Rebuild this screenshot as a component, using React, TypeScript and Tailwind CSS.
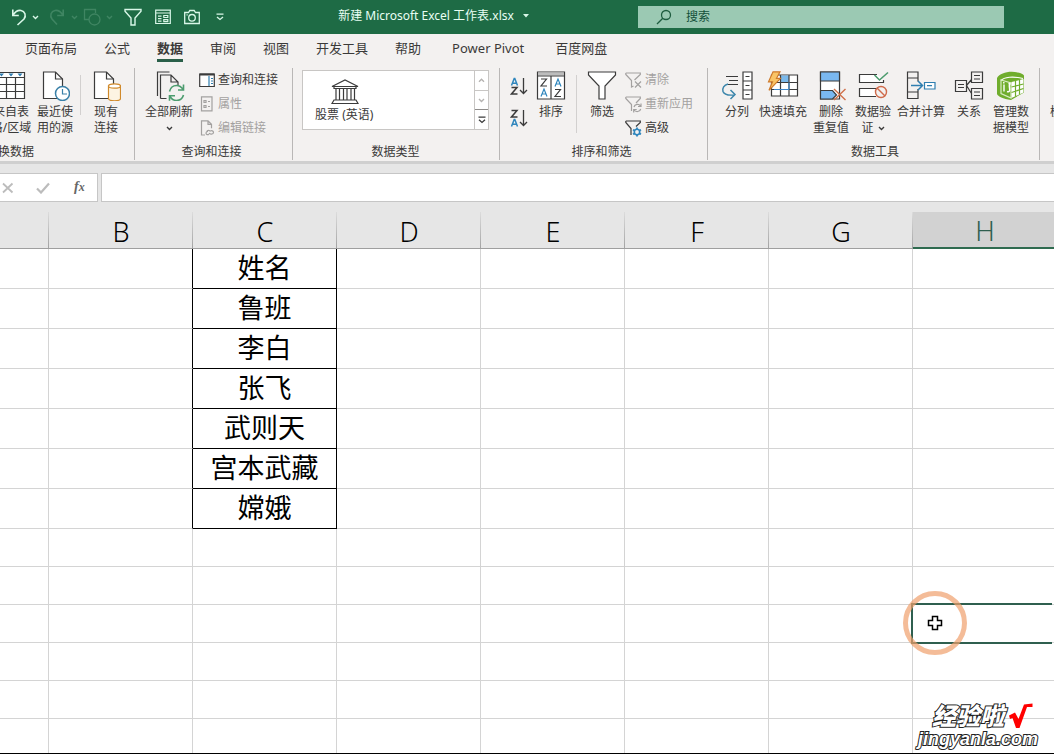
import React from 'react';

type IconProps = { children: React.ReactNode; w?: number; h?: number };

function Icon({ children, w = 30, h = 30 }: IconProps) {
  return (
    <svg width={w} height={h} viewBox={`0 0 ${w} ${h}`} fill="none" stroke="#3b3b3b" strokeWidth="1.2" className="shrink-0" aria-hidden="true">
      {children}
    </svg>
  );
}

function Chevron({ color = '#3b3b3b' }: { color?: string }) {
  return (
    <svg width="7" height="5" viewBox="0 0 7 5" fill="none" stroke={color} strokeWidth="1.4" className="inline-block shrink-0" aria-hidden="true">
      <path d="M1 1l2.5 2.5L6 1" />
    </svg>
  );
}

/* ---------- large ribbon icons ---------- */

const tableIcon = (
  <Icon>
    <path d="M1.500 1.500h27v26h-27zM10.500 6v21M19.500 6v21M1.500 6.500h27M1.500 13.500h27M1.500 20.500h27" fill="#fff" />
    <path d="M3 2.500h5l-2.500 3zM12.500 2.500h5l-2.500 3zM21.500 2.500h5l-2.500 3z" fill="#2b7bb0" stroke="none" />
  </Icon>
);

const recentIcon = (
  <Icon>
    <path d="M3.500 1h12l7 7v19.500h-19z" fill="#fff" />
    <path d="M15.500 1v7h7" />
    <circle cx="22.500" cy="22.500" r="7" fill="#fff" stroke="#3a80a8" strokeWidth="1.500" />
    <path d="M22.500 18v5h4.500" stroke="#3a80a8" />
  </Icon>
);

const existingIcon = (
  <Icon>
    <path d="M3.500 1h12l7 7v19.500h-19z" fill="#fff" />
    <path d="M15.500 1v7h7" />
    <path d="M17.500 15v12.500c0 1.300 2.700 2.300 6 2.300s6-1 6-2.300v-12.500z" fill="#fdf4e3" stroke="#d08a2c" />
    <ellipse cx="23.500" cy="15" rx="6" ry="2.200" fill="#fff" stroke="#d08a2c" />
  </Icon>
);

const refreshIcon = (
  <Icon w={32}>
    <path d="M4.500 25v-24h12" />
    <path d="M7.500 27.500v-23.500h10.500l7 7v3M18 4v7h7M7.500 27.500h6" />
    <path d="M16.500 20.500c1-4 4-6 7-6 3 0 5 1.500 6.500 4M30.500 13.500v5.500h-5.500M30.500 24c-1 3.500-4 5.500-7 5.500-3 0-5-1.500-6.500-4M16.500 29.800v-5h5.500" stroke="#4c9c6e" strokeWidth="1.600" />
  </Icon>
);

const sortIcon = (
  <Icon>
    <path d="M1.500 1h27v27h-27z" fill="#fff" />
    <path d="M2 1.500h26v3h-26z" fill="#bdbdbd" stroke="none" />
    <path d="M1.500 5h27M15 5v23" />
    <path d="M5 8h5.500l-5.500 7h6M19 18.500h5.500l-5.500 7h6" />
    <path d="M5 25.500l3-7.500 3 7.500M6 23h4M19 15.500l3-7.500 3 7.500M20 13h4" stroke="#2f86bd" />
  </Icon>
);

const filterIcon = (
  <Icon>
    <path d="M1.500 1h27v3l-10.500 11v13h-6v-13l-10.500-11z" fill="#fff" />
  </Icon>
);

const splitIcon = (
  <Icon w={32}>
    <path d="M5 5.500h12M8 9.500h9M6 13.500h11" />
    <path d="M22 1h9v27h-9zM22 10h9M22 19h9M24.500 5.500h4M24.500 14.500h4M24.500 23.500h4" fill="#fff" />
    <path d="M7 13c-4 1-6 4-5 7.500 1 3 5 4 11 3.500M9.500 19l4.500 4.500-4.500 4.500" stroke="#3c86ab" strokeWidth="1.500" />
  </Icon>
);

const flashIcon = (
  <Icon w={32}>
    <path d="M4.500 4h26v21h-26z" fill="#fff" />
    <path d="M14 4.500h8v7h-8z" fill="#7ab8ea" stroke="none" />
    <path d="M13.500 4v21M22 4v21M4.500 11.500h26M4.500 18.500h26" />
    <path d="M7 18.500h15M22 11.500v7" stroke="#3c86c9" />
    <path d="M6 .8h7l-3.500 6.500h4l-11.500 12 3.500-8.500h-4z" fill="#f9c466" stroke="#cf7a2b" strokeWidth="1.200" />
  </Icon>
);

const duplicateIcon = (
  <Icon>
    <path d="M4.500 1h19v27h-19z" fill="#fff" />
    <path d="M4.500 1h19v9h-19zM4.500 19.500h12l4 4.500-4 4h-12z" fill="#7ab8f0" />
    <path d="M18 18l11.500 11M29.500 18l-11.500 11" stroke="#d0704a" strokeWidth="1.400" />
  </Icon>
);

const validateIcon = (
  <Icon w={32}>
    <path d="M20 3.500H2.500v8h24V9" fill="#fff" />
    <path d="M19 25.500H2.500v-8H19" fill="#fff" />
    <path d="M17.500 4l5 5L31 1.500" stroke="#4c9c6e" strokeWidth="1.600" />
    <circle cx="24" cy="21" r="5.500" stroke="#cf6a4a" strokeWidth="1.400" />
    <path d="M20 17l8 8" stroke="#cf6a4a" strokeWidth="1.400" />
  </Icon>
);

const consolidateIcon = (
  <Icon>
    <path d="M1.500 1h10.500v6h-10.500zM1.500 21h10.500v6.500h-10.500zM1.500 7v14M12 10.500v-3M12 21v-3" />
    <path d="M5 14.500h11M12 10l4.500 4.500-4.500 4.500" stroke="#2f7fb0" strokeWidth="1.500" />
    <path d="M18.500 11.500h10.500v6.500h-10.500zM21 14.700h5" fill="#fff" stroke="#2f7fb0" />
  </Icon>
);

const relationIcon = (
  <Icon>
    <path d="M1.500 9.500h11v11h-11zM4 13.500h6M4 16.500h6M17.500 1h11v10.500h-11zM20 4.500h6M20 8h6M17.500 17.500h11v10.500h-11zM20 21h6M20 24.500h6M12.500 14.500l5-6M12.500 14.500l5 8" />
  </Icon>
);

const modelIcon = (
  <Icon>
    <path d="M1 7c3-5 12-7.500 21-5.500 3 .6 5 1.500 6 3v17l-13 7.500c-8-1-13-3.500-14-6z" fill="#70ad2d" stroke="none" />
    <path d="M5 9.500c3-3.500 12-4.500 22-2" stroke="#fff" strokeWidth="1.200" />
    <path d="M5 9v13.500l10 4.500v-15z" stroke="#d9edc2" />
    <path d="M15.500 11l12-3v13.500l-12 5.500z" fill="#fff" stroke="none" />
    <path d="M19.500 10v15.500M23.500 9v14.500M15.500 16l12-3M15.500 21.500l12-4" stroke="#70ad2d" />
    <path d="M8 13.500v7M7.800 11v1.500M11 20.500c2.500 1 3-1 2.500-3.500s-.5-4 1-4.500M12.500 13l2-.8" stroke="#fff" strokeWidth="1.400" />
  </Icon>
);

const whatIfIcon = (
  <Icon>
    <path d="M8.500 1.500h20v27h-20zM8.500 10h20M17 1.500v27" fill="#fff" />
  </Icon>
);

/* ---------- small ribbon icons ---------- */

const queryIcon = (
  <Icon w={16} h={16}>
    <path d="M.7 2h14.600v12.500H.7z" fill="#fff" />
    <path d="M.7 2.500h14.600" strokeWidth="2" />
    <path d="M10 4v10" stroke="#2f7fb0" />
    <path d="M12 6.500h2M12 9h2M12 11.500h2" stroke="#2f7fb0" />
  </Icon>
);

const propsIcon = (
  <Icon w={16} h={16}>
    <path d="M2.500.8h10.500v14h-10.500zM5 4.500h2v2h-2zM5 9.500h2v2h-2zM9 5.500h2M9 10.500h2" stroke="#a3a1a0" />
  </Icon>
);

const editLinkIcon = (
  <Icon w={16} h={16}>
    <path d="M6 15h-3.500V.8h6.500l3.500 3.500v4M9 .8v3.500h3.500" stroke="#a3a1a0" />
    <path d="M8 11.500c0-1.500 3-1.500 3.500 0M10 13c.5 1.500 4.500 1.500 4.500-.5s-2-2-3-1.500M10 14.500c-2 .5-3 0-3-1.500s1-1.500 2-1.500" stroke="#a3a1a0" />
  </Icon>
);

const clearIcon = (
  <Icon w={17} h={17}>
    <path d="M.8 1h14.500v1.500l-5.800 5.500M.8 1v1.500l5.700 6v6.500l2-1" stroke="#a3a1a0" />
    <path d="M10 9.500l6 6M16 9.500l-6 6" stroke="#a3a1a0" />
  </Icon>
);

const reapplyIcon = (
  <Icon w={17} h={17}>
    <path d="M.8 1h14.500v1.500l-4.300 4.500M.8 1v1.500l5.700 6v6.500" stroke="#a3a1a0" />
    <path d="M9 11c.7-3 5-3.500 6.500-.8M16 7.500v3h-3M15.700 13c-.7 3-5 3.300-6.500 1M8.700 16.500v-3h3" stroke="#a3a1a0" />
  </Icon>
);

const advancedIcon = (
  <Icon w={17} h={17}>
    <path d="M.8 1h14.500v1.500l-4.300 4M.8 1v1.500l5.200 6v6.500" />
    <circle cx="12" cy="12" r="2.700" stroke="#2f86bd" strokeWidth="1.600" />
    <path d="M12 7.500v2M12 14.500v2M8 9.700l1.800 1M14.200 13.300l1.800 1M8 14.300l1.800-1M14.200 10.700l1.800-1" stroke="#2f86bd" strokeWidth="1.800" />
  </Icon>
);

function SortArrow({ desc = false }: { desc?: boolean }) {
  const a = desc ? 10.5 : 1.5;
  const z = desc ? 1.5 : 10.5;
  return (
    <button type="button" aria-label={desc ? '降序' : '升序'} className="h-5">
      <Icon w={18} h={20}>
        <path d={`M1.500 ${a + 7}l2.700-7h.6l2.700 7M2.500 ${a + 4.700}h4`} stroke="#2f86bd" strokeWidth="1.500" />
        <path d={`M1.500 ${z}h5.500l-5.500 6.500h6`} strokeWidth="1.500" />
        <path d="M13.500 1v15.500M10 13l3.500 3.500L17 13" strokeWidth="1.300" />
      </Icon>
    </button>
  );
}

/* ---------- ribbon building blocks ---------- */

type BigProps = { icon: React.ReactNode; lines: string[]; width: string; arrow?: boolean };

function BigButton({ icon, lines, width, arrow }: BigProps) {
  return (
    <button type="button" className={`flex shrink-0 flex-col items-center pt-[3px] whitespace-nowrap ${width}`}>
      {icon}
      <span className="mt-[3px] block">{lines[0]}</span>
      {(lines[1] || arrow) && (
        <span className="flex h-4 items-center gap-1">
          {lines[1]}
          {arrow && <Chevron />}
        </span>
      )}
    </button>
  );
}

function SmallButton({ icon, label, disabled }: { icon: React.ReactNode; label: string; disabled?: boolean }) {
  return (
    <button type="button" disabled={disabled} className="flex h-6 items-center gap-[3px] whitespace-nowrap disabled:text-[#a3a1a0]">
      {icon}
      {label}
    </button>
  );
}

function Group({ title, className = '', children }: { title: string; className?: string; children: React.ReactNode }) {
  return (
    <section className={`flex shrink-0 flex-col border-r border-[#b9b7b6] ${className}`}>
      <div className="flex h-[76px] items-start">{children}</div>
      <h2 className="text-center">{title}</h2>
    </section>
  );
}

function Divider({ className = '' }: { className?: string }) {
  return <div className={`mt-[7px] w-px bg-[#d2d0cf] ${className}`} />;
}

/* ---------- data ---------- */

const tabs = ['页面布局', '公式', '数据', '审阅', '视图', '开发工具', '帮助', 'Power Pivot', '百度网盘'];
const columns = ['A', 'B', 'C', 'D', 'E', 'F', 'G', 'H'];
const names = ['姓名', '鲁班', '李白', '张飞', '武则天', '宫本武藏', '嫦娥'];
const rows = Array.from({ length: 13 }, (_, i) => names[i] ?? '');
const selectedRow = 9;

function TitleBar() {
  return (
    <header className="flex h-[34px] shrink-0 items-center bg-[#1e6b45] text-[#e9fff4]">
      <div className="flex shrink-0 items-center pl-[11px]">
        <button type="button" aria-label="撤消" className="flex items-center gap-[5px]">
          <svg width="16" height="18" viewBox="0 0 16 18" fill="none" stroke="#d9f7e8" strokeWidth="1.600">
            <path d="M1.800 1.500v6h6M2 7.200C4 4 7 2 10 2.500c4 .7 5.500 5 3 8.500L6.500 17" />
          </svg>
          <Chevron color="#d9f7e8" />
        </button>
        <button type="button" aria-label="恢复" className="ml-[10px] flex items-center gap-[6px]">
          <svg width="16" height="18" viewBox="0 0 16 18" fill="none" stroke="#3f8562" strokeWidth="1.600">
            <path d="M14.200 1.500v6h-6M14 7.200C12 4 9 2 6 2.500 2 3.200.5 7.500 3 11l5 5.500" />
          </svg>
          <Chevron color="#3f8562" />
        </button>
        <button type="button" aria-label="形状" className="ml-[5px] flex items-center gap-[5px]">
          <svg width="18" height="18" viewBox="0 0 18 18" fill="none" stroke="#3f8562" strokeWidth="1.300">
            <path d="M6 11.500H1.500v-10h11V5" />
            <circle cx="11.500" cy="11.500" r="5.500" />
          </svg>
          <Chevron color="#3f8562" />
        </button>
        <button type="button" aria-label="筛选" className="ml-[11px]">
          <svg width="18" height="18" viewBox="0 0 18 18" fill="none" stroke="#d9f7e8" strokeWidth="1.400">
            <path d="M1 1.500h16v1.700L11 10v7H7v-7L1 3.200z" />
          </svg>
        </button>
        <button type="button" aria-label="窗体" className="ml-[13px]">
          <svg width="16" height="16" viewBox="0 0 16 16" fill="none" stroke="#d9f7e8" strokeWidth="1.200">
            <path d="M.7 1.200h14.600v13.300H.7zM.7 4h14.600M3 7.200h3.500M3 9.700h3.500M3 12.200h3.500M8.800 6.500h4v2h-4zM8.800 10.700h4v2h-4z" />
          </svg>
        </button>
        <button type="button" aria-label="照相机" className="ml-[13px]">
          <svg width="16" height="16" viewBox="0 0 16 16" fill="none" stroke="#d9f7e8" strokeWidth="1.300">
            <path d="M.7 3.500h3.800l1.300-2h4.400l1.300 2h3.800v11H.7zM2.500 5.800h1.200" />
            <circle cx="8" cy="8.800" r="3.300" />
          </svg>
        </button>
        <button type="button" aria-label="自定义快速访问工具栏" className="ml-[16px]">
          <svg width="8" height="8" viewBox="0 0 8 8" fill="none" stroke="#d9f7e8" strokeWidth="1.300">
            <path d="M.5 1.200h7M1 4l3 2.500L7 4" />
          </svg>
        </button>
      </div>
      <div className="flex flex-1 items-center justify-center gap-[9px] pb-[3px] pl-[5px] whitespace-nowrap">
        <h1>新建 Microsoft Excel 工作表.xlsx</h1>
        <svg width="6" height="4" viewBox="0 0 6 4" fill="#d9f7e8" aria-hidden="true">
          <path d="M0 0h6L3 3.500z" />
        </svg>
      </div>
      <label className="mr-[50px] flex h-[22px] w-[366px] items-center bg-[#9bc9b3] pl-[18px]">
        <svg width="16" height="16" viewBox="0 0 16 16" fill="none" stroke="#1e5c3f" strokeWidth="1.300" aria-hidden="true">
          <circle cx="10" cy="6" r="4.500" />
          <path d="M6.800 9.200L1 15" />
        </svg>
        <input type="search" aria-label="搜索" placeholder="搜索" className="ml-[14px] min-w-0 flex-1 bg-transparent outline-none placeholder:text-[#14503a]" />
      </label>
    </header>
  );
}

function Ribbon() {
  return (
    <div className="flex shrink-0 overflow-hidden border-b-[3px] border-[#cfcfcf] bg-[#f3f1f0] pt-1 pb-px leading-4 text-[#3b3a39]">
      <Group title="获取和转换数据" className="-ml-[150px] w-[285px]">
        <div className="flex w-full justify-end pr-4">
          <BigButton icon={tableIcon} lines={['来自表', '格/区域']} width="w-9" />
          <div className="w-2 shrink-0" />
          <BigButton icon={recentIcon} lines={['最近使', '用的源']} width="w-9" />
          <Divider className="mx-[7px] h-10" />
          <div className="w-[6px]" />
          <BigButton icon={existingIcon} lines={['现有', '连接']} width="w-6" />
        </div>
      </Group>

      <Group title="查询和连接" className="pr-[14px] pl-[10px]">
        <BigButton icon={refreshIcon} lines={['全部刷新']} width="w-12" arrow />
        <div className="ml-[6px]">
          <SmallButton icon={queryIcon} label="查询和连接" />
          <SmallButton icon={propsIcon} label="属性" disabled />
          <SmallButton icon={editLinkIcon} label="编辑链接" disabled />
        </div>
      </Group>

      <Group title="数据类型" className="pr-[10px] pl-[9px]">
        <div className="mt-[2px] flex h-[60px] w-[187px] border border-[#c8c6c4] bg-white">
          <button type="button" className="flex flex-1 flex-col items-start pt-2 pl-3">
            <span className="pl-4">
              <Icon w={28} h={26}>
                <path d="M1 7.500h26L14 1zM3 7.500v2h22v-2M5 10v11M8.500 10v11M12.500 10v11M16 10v11M20 10v11M23.500 10v11M3 21h22l2 3.500H1z" />
              </Icon>
            </span>
            <span className="mt-[2px]">股票 (英语)</span>
          </button>
          <div className="flex w-[14px] flex-col border-l border-[#c8c6c4]">
            <button type="button" aria-label="上一行" className="flex flex-1 rotate-180 items-center justify-center"><Chevron color="#b5b3b1" /></button>
            <button type="button" aria-label="下一行" className="flex flex-1 items-center justify-center border-t border-[#c8c6c4]"><Chevron color="#b5b3b1" /></button>
            <button type="button" aria-label="其他" className="flex flex-1 items-center justify-center border-t border-[#8f8d8b]">
              <svg width="8" height="8" viewBox="0 0 8 8" fill="none" stroke="#3b3b3b" strokeWidth="1.300">
                <path d="M.5 1.200h7M1 3.800l3 2.700 3-2.700" />
              </svg>
            </button>
          </div>
        </div>
      </Group>

      <Group title="排序和筛选" className="pr-[14px] pl-[10px]">
        <div className="flex flex-col gap-3 pt-[9px]">
          <SortArrow />
          <SortArrow desc />
        </div>
        <div className="w-2" />
        <BigButton icon={sortIcon} lines={['排序']} width="w-[30px]" />
        <Divider className="mr-[10px] ml-[10px] h-[58px]" />
        <BigButton icon={filterIcon} lines={['筛选']} width="w-[30px]" />
        <div className="ml-2">
          <SmallButton icon={clearIcon} label="清除" disabled />
          <SmallButton icon={reapplyIcon} label="重新应用" disabled />
          <SmallButton icon={advancedIcon} label="高级" />
        </div>
      </Group>

      <Group title="数据工具" className="pr-[10px] pl-[13px]">
        <div className="flex gap-[6px]">
          <BigButton icon={splitIcon} lines={['分列']} width="w-8" />
          <BigButton icon={flashIcon} lines={['快速填充']} width="w-12" />
          <BigButton icon={duplicateIcon} lines={['删除', '重复值']} width="w-9" />
          <BigButton icon={validateIcon} lines={['数据验', '证']} width="w-9" arrow />
          <BigButton icon={consolidateIcon} lines={['合并计算']} width="w-12" />
          <BigButton icon={relationIcon} lines={['关系']} width="w-9" />
          <BigButton icon={modelIcon} lines={['管理数', '据模型']} width="w-9" />
        </div>
      </Group>

      <Group title="预测" className="pl-[10px]">
        <BigButton icon={whatIfIcon} lines={['模拟分析']} width="w-12" arrow />
      </Group>
    </div>
  );
}

function FormulaBar() {
  return (
    <div className="flex h-12 shrink-0 gap-[3px] bg-[#e6e6e6] pt-[9px] pb-[10px]">
      <div className="flex w-[98px] items-center border border-l-0 border-[#c6c6c6] bg-white">
        <button type="button" aria-label="取消" className="w-[14px] pl-[2px]">
          <svg width="12" height="12" viewBox="0 0 12 12" fill="none" stroke="#bcbcbc" strokeWidth="1.800"><path d="M1 1.500l9.500 9M10.500 1.500L1 10.500" /></svg>
        </button>
        <button type="button" aria-label="输入" className="ml-[22px]">
          <svg width="14" height="12" viewBox="0 0 14 12" fill="none" stroke="#bcbcbc" strokeWidth="2.200"><path d="M1 6.500l4 4L13 1.500" /></svg>
        </button>
        <button type="button" aria-label="插入函数" className="ml-6 pb-[2px] font-['Liberation_Serif',serif] text-sm leading-4 font-bold text-[#666] italic">
          f<span className="text-xs">x</span>
        </button>
      </div>
      <input aria-label="编辑栏" className="min-w-0 flex-1 border border-r-0 border-[#c6c6c6] bg-white px-2 outline-none" />
    </div>
  );
}

function Cell({ row, col }: { row: number; col: number }) {
  const filled = row < names.length;
  const height = filled ? 'h-10' : 'h-[38px]';
  if (filled && col === 2) {
    return <td className="h-10 border-r border-b border-black p-0 pb-[2px] text-center">{rows[row]}</td>;
  }
  if (row === selectedRow && col === 7) {
    return (
      <td className="relative h-[38px] border-r border-b border-[#d4d4d4] p-0">
        <div className="absolute -top-[2px] right-1 -bottom-[2px] -left-[2px] border-2 border-r-0 border-[#2f5f4f]" />
        <div className="absolute -top-[14px] -left-[10px] h-16 w-16 rounded-full border-[5px] border-[#f0a06c]/70" />
        <svg width="16" height="16" viewBox="0 0 16 16" className="absolute top-[10px] left-[14px]" fill="#fff" stroke="#000" strokeWidth="1.500" aria-hidden="true">
          <path d="M5.500 1.500h5v4h4v5h-4v4h-5v-4h-4v-5h4z" />
        </svg>
      </td>
    );
  }
  const side = filled && col === 1 ? 'border-r-black' : 'border-r-[#d4d4d4]';
  return <td className={`${height} border-r border-b border-b-[#d4d4d4] p-0 ${side}`} />;
}

function Sheet() {
  return (
    <main className="relative min-h-0 flex-1 overflow-hidden border-b border-black bg-white">
      <table className="w-[1057px] table-fixed border-separate border-spacing-0 text-[27px] leading-8 text-black">
        <thead>
          <tr>
            {columns.map((c, i) => (
              <th
                key={c}
                scope="col"
                className={`h-[37px] bg-[linear-gradient(to_top,#a3a3a3,#dcdcdc)] bg-[length:1px_100%] bg-right bg-no-repeat p-0 pt-[3px] text-center font-light ${i === 0 ? 'w-[49px]' : 'w-36'} ${
                  c === 'H' ? 'border-b-2 border-[#2f6b50] bg-[#d2d2d2] text-[#2f5f4f]' : 'border-b border-[#9f9f9f] bg-[#e6e6e6]'
                }`}
              >
                {i > 0 && c}
              </th>
            ))}
          </tr>
        </thead>
        <tbody>
          {rows.map((_, r) => (
            <tr key={r}>
              {columns.map((c, i) => (
                <Cell key={c} row={r} col={i} />
              ))}
            </tr>
          ))}
        </tbody>
      </table>

      <div className="absolute right-4 bottom-1 text-right text-white [paint-order:stroke_fill] [-webkit-text-stroke:2px_#222]">
        <div className="flex items-center justify-end gap-[5px] pr-[5px]">
          <span className="text-2xl leading-6 font-black italic">经验啦</span>
          <svg width="24" height="26" viewBox="0 0 24 26" aria-hidden="true">
            <path d="M0 12.500l6-3 3.500 6.500L15 1.500 23.500.5v3.500h-5.500L10.500 25H7L3.500 15l-2.500 1z" fill="#f00" />
          </svg>
        </div>
        <div className="font-['Liberation_Sans',sans-serif] text-lg leading-5 font-bold italic">jingyanla.com</div>
      </div>
    </main>
  );
}

export default function App() {
  return (
    <div className="flex h-screen flex-col overflow-hidden bg-[#e6e6e6] font-['Noto_Sans','Noto_Sans_CJK_SC',sans-serif] text-xs">
      <TitleBar />
      <nav className="flex h-[30px] shrink-0 gap-[27px] bg-[#f3f1f0] pl-[25px] text-[13px] leading-7 whitespace-nowrap text-[#3b3a39]">
        {tabs.map((t) => (
          <a
            key={t}
            href="#"
            className={`h-7 ${t === '数据' ? 'border-b-[3px] border-[#2a5f49] font-bold' : ''} ${t === 'Power Pivot' ? 'px-1' : ''}`}
          >
            {t}
          </a>
        ))}
      </nav>
      <Ribbon />
      <FormulaBar />
      <Sheet />
    </div>
  );
}
